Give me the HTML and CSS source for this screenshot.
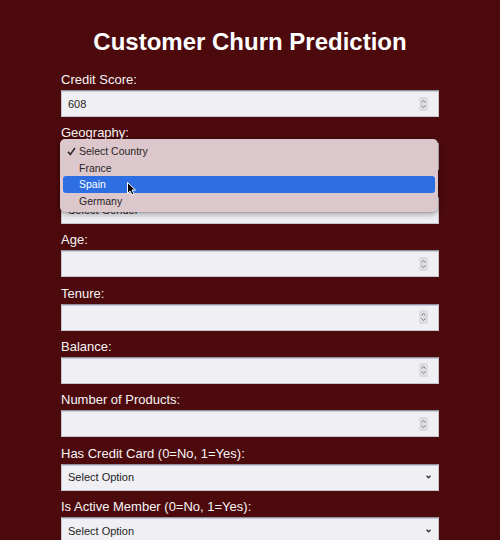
FILE: index.html
```html
<!DOCTYPE html>
<html lang="en">
<head>
<meta charset="utf-8">
<title>Customer Churn Prediction</title>
<link rel="stylesheet" href="styles.css">
</head>
<body>
<div class="page">
  <h1 class="title">Customer Churn Prediction</h1>
  <form class="form">
    <div class="group">
      <label class="label">Credit Score:</label>
      <div class="field"><span class="val">608</span><svg class="spin" width="9" height="14" viewBox="0 0 9 14"><rect x="0" y="0" width="9" height="14" rx="2" fill="#dcdce2"/><path d="M2.5 5.5 L4.5 3.5 L6.5 5.5 M2.5 8.5 L4.5 10.5 L6.5 8.5" fill="none" stroke="#7a7a80" stroke-width="1"/></svg></div>
    </div>
    <div class="group">
      <label class="label">Geography:</label>
      <div class="field"><span class="val">Select Country</span><svg class="chev" width="5" height="4" viewBox="0 0 5 4"><path d="M0.5 0.8 L2.5 2.8 L4.5 0.8" fill="none" stroke="#333" stroke-width="1.3"/></svg></div>
    </div>
    <div class="group">
      <label class="label">Gender:</label>
      <div class="field"><span class="val">Select Gender</span><svg class="chev" width="5" height="4" viewBox="0 0 5 4"><path d="M0.5 0.8 L2.5 2.8 L4.5 0.8" fill="none" stroke="#333" stroke-width="1.3"/></svg></div>
    </div>
    <div class="group">
      <label class="label">Age:</label>
      <div class="field"><span class="val"></span><svg class="spin" width="9" height="14" viewBox="0 0 9 14"><rect x="0" y="0" width="9" height="14" rx="2" fill="#dcdce2"/><path d="M2.5 5.5 L4.5 3.5 L6.5 5.5 M2.5 8.5 L4.5 10.5 L6.5 8.5" fill="none" stroke="#7a7a80" stroke-width="1"/></svg></div>
    </div>
    <div class="group">
      <label class="label">Tenure:</label>
      <div class="field"><span class="val"></span><svg class="spin" width="9" height="14" viewBox="0 0 9 14"><rect x="0" y="0" width="9" height="14" rx="2" fill="#dcdce2"/><path d="M2.5 5.5 L4.5 3.5 L6.5 5.5 M2.5 8.5 L4.5 10.5 L6.5 8.5" fill="none" stroke="#7a7a80" stroke-width="1"/></svg></div>
    </div>
    <div class="group">
      <label class="label">Balance:</label>
      <div class="field"><span class="val"></span><svg class="spin" width="9" height="14" viewBox="0 0 9 14"><rect x="0" y="0" width="9" height="14" rx="2" fill="#dcdce2"/><path d="M2.5 5.5 L4.5 3.5 L6.5 5.5 M2.5 8.5 L4.5 10.5 L6.5 8.5" fill="none" stroke="#7a7a80" stroke-width="1"/></svg></div>
    </div>
    <div class="group">
      <label class="label">Number of Products:</label>
      <div class="field"><span class="val"></span><svg class="spin" width="9" height="14" viewBox="0 0 9 14"><rect x="0" y="0" width="9" height="14" rx="2" fill="#dcdce2"/><path d="M2.5 5.5 L4.5 3.5 L6.5 5.5 M2.5 8.5 L4.5 10.5 L6.5 8.5" fill="none" stroke="#7a7a80" stroke-width="1"/></svg></div>
    </div>
    <div class="group">
      <label class="label">Has Credit Card (0=No, 1=Yes):</label>
      <div class="field"><span class="val">Select Option</span><svg class="chev" width="5" height="4" viewBox="0 0 5 4"><path d="M0.5 0.8 L2.5 2.8 L4.5 0.8" fill="none" stroke="#333" stroke-width="1.3"/></svg></div>
    </div>
    <div class="group">
      <label class="label">Is Active Member (0=No, 1=Yes):</label>
      <div class="field"><span class="val">Select Option</span><svg class="chev" width="5" height="4" viewBox="0 0 5 4"><path d="M0.5 0.8 L2.5 2.8 L4.5 0.8" fill="none" stroke="#333" stroke-width="1.3"/></svg></div>
    </div>
    <div class="group">
      <label class="label">Estimated Salary:</label>
      <div class="field"><span class="val"></span><svg class="spin" width="9" height="14" viewBox="0 0 9 14"><rect x="0" y="0" width="9" height="14" rx="2" fill="#dcdce2"/><path d="M2.5 5.5 L4.5 3.5 L6.5 5.5 M2.5 8.5 L4.5 10.5 L6.5 8.5" fill="none" stroke="#7a7a80" stroke-width="1"/></svg></div>
    </div>
  </form>

  <div class="popup">
    <div class="opt"><svg class="check" width="9" height="9" viewBox="0 0 9 9"><path d="M1 4.8 L3.3 7.5 L8 1" fill="none" stroke="#2a2425" stroke-width="1.5"/></svg>Select Country</div>
    <div class="opt">France</div>
    <div class="opt active">Spain</div>
    <div class="opt">Germany</div>
  </div>
  <svg class="cursor" width="10" height="14" viewBox="0 0 10 14"><path d="M0.5 0.5 L0.5 11.5 L3 9 L5 13 L7 12 L5 8 L8.5 8 Z" fill="#000" stroke="#fff" stroke-width="1"/></svg>
</div>
</body>
</html>
```

FILE: styles.css
```css
html, body {
  margin: 0;
  padding: 0;
}
body {
  background: #4c0a0d;
  font-family: "Liberation Sans", Arial, Helvetica, sans-serif;
  color: #ffffff;
}
.page {
  position: relative;
  width: 378px;
  margin: 0 auto;
  padding-top: 28px;
}
.title {
  margin: 0 0 16px;
  font-size: 24px;
  line-height: 28px;
  font-weight: bold;
  text-align: center;
  color: #ffffff;
  white-space: nowrap;
}
.form {
  display: flex;
  flex-direction: column;
  gap: 8.4px;
}
.group {
  display: flex;
  flex-direction: column;
  gap: 3px;
}
.label {
  font-size: 13px;
  line-height: 15px;
  color: #f7f4f4;
}
.field {
  box-sizing: border-box;
  height: 27px;
  display: flex;
  align-items: center;
  justify-content: space-between;
  padding: 0 10px 0 6px;
  background: #efeff4;
  border: 1px solid #c4c4cc;
  border-top-color: #8e93a2;
  box-shadow: inset 0 1px 0 #c9ccd6;
  font-size: 11px;
  color: #1e1e1e;
}
.field .chev {
  margin-right: -3px;
}
.popup {
  position: absolute;
  left: -1px;
  top: 139px;
  width: 378px;
  box-sizing: border-box;
  padding: 4px 3px 3px;
  background: #dcc8cc;
  border-radius: 5px;
  box-shadow: 0 2px 6px rgba(0, 0, 0, 0.35), 0 0 0 1px rgba(0, 0, 0, 0.08);
  font-size: 10.5px;
  color: #2a2425;
}
.opt {
  height: 16.5px;
  line-height: 16.5px;
  padding-left: 16px;
  position: relative;
  border-radius: 3px;
}
.opt.active {
  background: #2d6ee3;
  color: #ffffff;
}
.check {
  position: absolute;
  left: 4px;
  top: 4px;
}
.cursor {
  position: absolute;
  left: 66px;
  top: 182px;
}
```
